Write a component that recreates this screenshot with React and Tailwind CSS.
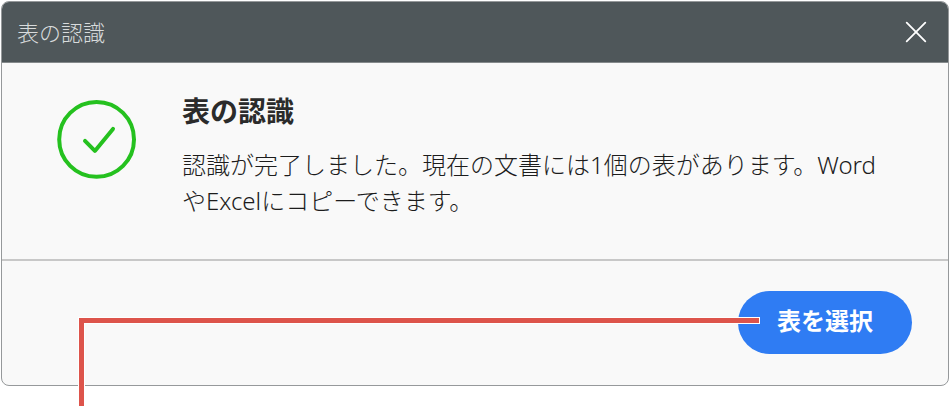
const CloseIcon = () => (
  <svg width="22" height="22" viewBox="0 0 22 22" fill="none" stroke="currentColor" strokeWidth="1.8" strokeLinecap="round" aria-hidden>
    <path d="M1.7 1.7 20.3 20.3M20.3 1.7 1.7 20.3" />
  </svg>
);

const SuccessIcon = () => (
  <svg width="80" height="80" viewBox="0 0 80 80" fill="none" stroke="#25c11f" strokeWidth="4" strokeLinecap="round" strokeLinejoin="round" className="shrink-0" aria-hidden>
    <circle cx="39.6" cy="40.4" r="37.4" />
    <path d="M28 41.9 37.9 51.9 56 29.9" />
  </svg>
);

// Leader line that points at the confirm button
const Callout = () => (
  <div className="pointer-events-none absolute top-[317px] right-[190px] bottom-0 left-[78px] border-t-7 border-l-7 border-white" aria-hidden>
    <div className="absolute -top-1.5 right-px bottom-0 -left-1.5 border-t-5 border-l-5 border-[#dd544b]" />
  </div>
);

const App = () => {
  return (
    <main className="relative bg-white px-px pt-px pb-5 font-['Noto_Sans','Noto_Sans_CJK_JP',sans-serif]" lang="ja">
      <section
        role="dialog"
        aria-labelledby="dialog-title"
        className="overflow-hidden rounded-lg border border-[#96999b] bg-[#f9f9f9]"
      >
        <header className="flex h-[61px] items-center justify-between border-b border-[#858a8c] bg-[#4f575a] pr-[21px] pl-[15px]">
          <span className="text-[22px] leading-8 font-light text-[#d8dbdc]">表の認識</span>
          <button type="button" aria-label="閉じる" className="text-white">
            <CloseIcon />
          </button>
        </header>

        <div className="flex items-start gap-[45px] px-[55px] pt-9 pb-10">
          <SuccessIcon />
          <div className="min-w-0 flex-1 text-[#2b2b2b]">
            <h1 id="dialog-title" className="mb-6 text-[28px] leading-6 font-bold">
              表の認識
            </h1>
            <p className="text-2xl leading-9 font-light text-[#1c1c1c]">
              認識が完了しました。現在の文書には1個の表があります。WordやExcelにコピーできます。
            </p>
          </div>
        </div>

        <footer className="flex justify-end border-t-2 border-[#c8c8c8] px-9 pt-[30px] pb-[31px]">
          <button type="button" className="h-[63px] rounded-full bg-[#2f7cf3] px-[39px] pb-1 text-2xl leading-8 font-bold text-white">
            表を選択
          </button>
        </footer>
      </section>
      <Callout />
    </main>
  );
};

export default App;
